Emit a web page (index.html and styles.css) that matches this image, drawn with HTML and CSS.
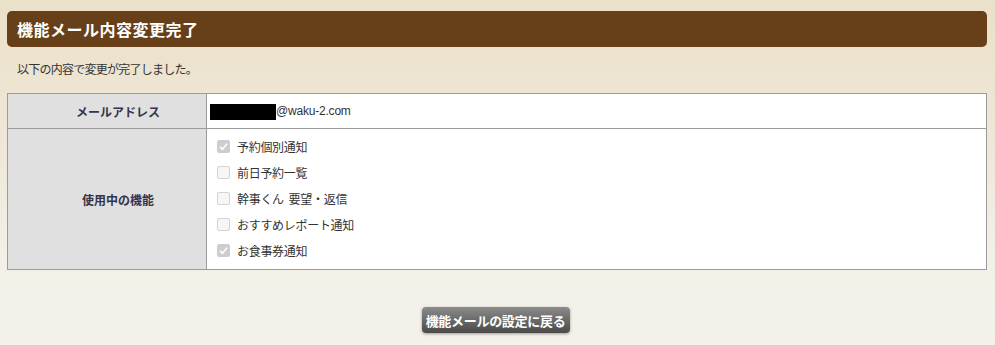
FILE: index.html
```html
<!DOCTYPE html>
<html lang="ja">
<head>
<meta charset="utf-8">
<link rel="stylesheet" href="styles.css">
</head>
<body>
<div class="page">
  <h1 class="title">機能メール内容変更完了</h1>
  <p class="lead">以下の内容で変更が完了しました。</p>
  <table class="info">
    <tr class="row-mail">
      <th>メールアドレス</th>
      <td><span class="mask"></span><span class="addr">@waku-2.com</span></td>
    </tr>
    <tr class="row-func">
      <th>使用中の機能</th>
      <td>
        <ul class="checks">
          <li><span class="cb on"><svg viewBox="0 0 13 13" width="13" height="13"><path d="M3 6.8 L5.4 9.2 L10 3.8" fill="none" stroke="#fff" stroke-width="1.6"/></svg></span>予約個別通知</li>
          <li><span class="cb"></span>前日予約一覧</li>
          <li><span class="cb"></span>幹事くん&nbsp;&nbsp;要望・返信</li>
          <li><span class="cb"></span>おすすめレポート通知</li>
          <li><span class="cb on"><svg viewBox="0 0 13 13" width="13" height="13"><path d="M3 6.8 L5.4 9.2 L10 3.8" fill="none" stroke="#fff" stroke-width="1.6"/></svg></span>お食事券通知</li>
        </ul>
      </td>
    </tr>
  </table>
  <div class="actions">
    <button class="btn">機能メールの設定に戻る</button>
  </div>
</div>
</body>
</html>
```

FILE: styles.css
```css
html, body {
  margin: 0;
  padding: 0;
}
body {
  width: 995px;
  height: 345px;
  overflow: hidden;
  background: linear-gradient(to bottom, #ebe0c9 0px, #eee6d5 120px, #f3f0e8 260px, #f4f1ea 345px);
  font-family: "Noto Sans CJK JP", "Noto Sans", sans-serif;
  color: #333;
}
.page {
  padding: 11px 8px 0 7px;
}
.title {
  margin: 0;
  height: 36px;
  line-height: 36px;
  background: #673f19;
  border-radius: 5px;
  color: #fff;
  font-size: 16px;
  font-weight: bold;
  padding-left: 10px;
  letter-spacing: 0.5px;
}
.lead {
  margin: 0;
  padding: 13px 0 0 10px;
  height: 33px;
  font-size: 12px;
  line-height: 17px;
  letter-spacing: -0.75px;
  color: #333;
}
.info {
  width: 980px;
  border-collapse: collapse;
  background: #fff;
  font-size: 12px;
}
.info th, .info td {
  border: 1px solid #9b9b9b;
}
.info th {
  width: 199px;
  background: #e0e0e0;
  font-weight: bold;
  color: #36334a;
  text-align: center;
  padding: 0 0 0 22px;
  box-sizing: border-box;
}
.info td {
  padding: 0 0 0 3px;
}
.row-mail th, .row-mail td {
  height: 34px;
}
.mask {
  display: inline-block;
  width: 66px;
  height: 16px;
  background: #000;
  vertical-align: middle;
}
.addr {
  font-family: "Liberation Sans", Arial, sans-serif;
  letter-spacing: -0.2px;
}
.row-mail td {
  line-height: 16px;
}
.checks {
  list-style: none;
  margin: 0;
  padding: 4px 0 6px 7px;
}
.checks li {
  height: 26px;
  display: flex;
  align-items: center;
  font-size: 12px;
  letter-spacing: -0.3px;
}
.cb {
  width: 11px;
  height: 11px;
  border: 1px solid #d4d4d4;
  border-radius: 2px;
  background: #f6f6f6;
  margin-right: 7px;
  position: relative;
  display: inline-block;
}
.cb.on {
  background: #cdcdcd;
  border-color: #cdcdcd;
}
.cb svg {
  position: absolute;
  left: -1px;
  top: -1px;
}
.actions {
  display: flex;
  justify-content: center;
  padding-top: 37px;
  padding-right: 3px;
}
.btn {
  height: 26px;
  width: 148px;
  border: 0;
  border-radius: 4px;
  background: linear-gradient(to bottom, #8c8c8c 0%, #6a6a6a 50%, #4a4a4a 100%);
  color: #fff;
  font-family: "Noto Sans CJK JP", "Noto Sans", sans-serif;
  font-size: 13px;
  font-weight: bold;
  letter-spacing: -0.3px;
  padding: 0;
  box-shadow: 0 1px 3px rgba(0,0,0,0.35);
}
```
